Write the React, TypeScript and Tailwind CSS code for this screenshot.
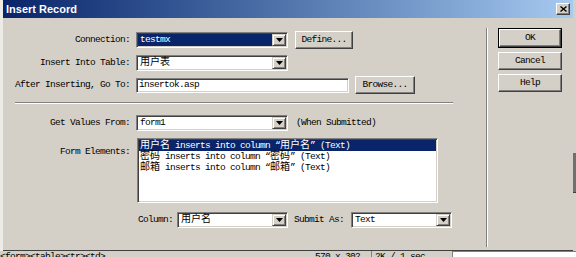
import React from 'react'

const CJK = /([\u3000-\u303f\u4e00-\u9fff\uff00-\uffef]+)/

// ASCII is squeezed to a 5px cell, Chinese keeps its full 10px width
function T({ s }: { s: string }) {
  return (
    <>
      {s.split(CJK).map((p, i) =>
        i % 2 === 1 ? (
          <span key={i} className="text-[10px] tracking-normal">
            {p}
          </span>
        ) : (
          <React.Fragment key={i}>{p}</React.Fragment>
        )
      )}
    </>
  )
}

const sunken =
  'bg-white border border-t-[#808080] border-l-[#808080] border-r-white border-b-white shadow-[inset_1px_1px_0_#404040,inset_-1px_-1px_0_#d4d0c8]'

const raised =
  'bg-[#d4d0c8] border border-t-white border-l-white border-r-[#404040] border-b-[#404040] shadow-[inset_-1px_-1px_0_#808080]'

function Arrow() {
  return (
    <div className="flex h-full w-[14px] shrink-0 items-center justify-center bg-[#d4d0c8] border border-t-[#d4d0c8] border-l-[#d4d0c8] border-r-[#404040] border-b-[#404040] shadow-[inset_1px_1px_0_#fff,inset_-1px_-1px_0_#808080]">
      <svg width="7" height="4" viewBox="0 0 7 4">
        <path d="M0 0h7L3.5 4z" fill="#000" />
      </svg>
    </div>
  )
}

function Select({
  value,
  width,
  selected = false,
}: {
  value: string
  width: string
  selected?: boolean
}) {
  return (
    <div className={`flex h-[16px] shrink-0 p-[1px] ${width} ${sunken}`}>
      <div
        className={`flex flex-1 items-center pl-[2px] leading-none ${
          selected ? 'bg-[#0a246a] text-white' : ''
        }`}
      >
        <T s={value} />
      </div>
      <Arrow />
    </div>
  )
}

function Button({ label, width }: { label: string; width: string }) {
  return (
    <div
      className={`flex h-[18px] shrink-0 items-center justify-center leading-none ${width} ${raised}`}
    >
      {label}
    </div>
  )
}

function Label({ text }: { text: string }) {
  return <div className="w-[127px] shrink-0 text-right leading-none">{text}</div>
}

const elements = [
  '用户名 inserts into column “用户名” (Text)',
  '密码 inserts into column “密码” (Text)',
  '邮箱 inserts into column “邮箱” (Text)',
]

export default function App() {
  return (
    <div className="flex h-[257px] w-[576px] flex-col overflow-hidden bg-[#d4d0c8] font-['Liberation_Mono','Noto_Sans_CJK_SC',monospace] text-[9.5px] tracking-[-0.7px] text-black">
      <div className="flex h-[251px] shrink-0">
        {/* page behind the dialog */}
        <div className="w-[3px] shrink-0 bg-[#ecebe6]" />

        {/* dialog */}
        <div className="flex w-[570px] shrink-0 flex-col border-b border-[#404040] bg-[#d4d0c8]">
          <div className="flex h-[18px] shrink-0 items-center bg-linear-to-r from-[#0a246a] to-[#a6caf0] pl-[3px] pr-[3px]">
            <span className="flex-1 font-['Liberation_Sans',sans-serif] text-[11px] font-bold tracking-normal text-white">
              Insert Record
            </span>
            <div className={`flex h-[12px] w-[14px] items-center justify-center ${raised}`}>
              <svg width="7" height="6" viewBox="0 0 7 6">
                <path d="M0.5 0.5l6 5M6.5 0.5l-6 5" stroke="#000" strokeWidth="1.4" />
              </svg>
            </div>
          </div>

          <div className="flex flex-1">
            {/* left side: the form */}
            <div className="flex w-[483px] shrink-0 flex-col">
              <div className="mt-[13px] flex h-[18px] items-center">
                <Label text="Connection:" />
                <div className="ml-[6px]">
                  <Select value="testmx" width="w-[152px]" selected />
                </div>
                <div className="ml-[7px]">
                  <Button label="Define..." width="w-[58px]" />
                </div>
              </div>

              <div className="mt-[5px] flex h-[18px] items-center">
                <Label text="Insert Into Table:" />
                <div className="ml-[6px]">
                  <Select value="用户表" width="w-[152px]" />
                </div>
              </div>

              <div className="mt-[4px] flex h-[18px] items-center">
                <Label text="After Inserting, Go To:" />
                <div
                  className={`ml-[6px] flex h-[15px] w-[213px] items-center pl-[2px] leading-none ${sunken}`}
                >
                  insertok.asp
                </div>
                <div className="ml-[6px]">
                  <Button label="Browse..." width="w-[60px]" />
                </div>
              </div>

              <div className="ml-[12px] mt-[8px] h-[2px] w-[438px] border-t border-b border-t-[#808080] border-b-white" />

              <div className="mt-[10px] flex h-[18px] items-center">
                <Label text="Get Values From:" />
                <div className="ml-[6px]">
                  <Select value="form1" width="w-[152px]" />
                </div>
                <span className="ml-[8px] leading-none">(When Submitted)</span>
              </div>

              <div className="mt-[6px] flex items-start">
                <div className="pt-[9px]">
                  <Label text="Form Elements:" />
                </div>
                <div className={`ml-[7px] flex h-[65px] w-[301px] flex-col p-[1px] ${sunken}`}>
                  {elements.map((e, i) => (
                    <div
                      key={e}
                      className={`h-[11px] whitespace-nowrap pl-[1px] leading-[11px] ${
                        i === 0 ? 'bg-[#0a246a] text-white' : ''
                      }`}
                    >
                      <T s={e} />
                    </div>
                  ))}
                </div>
              </div>

              <div className="ml-[135px] mt-[8px] flex h-[18px] items-center">
                <span className="leading-none">Column:</span>
                <div className="ml-[4px]">
                  <Select value="用户名" width="w-[111px]" />
                </div>
                <span className="ml-[6px] leading-none">Submit As:</span>
                <div className="ml-[7px]">
                  <Select value="Text" width="w-[101px]" />
                </div>
              </div>
            </div>

            {/* divider */}
            <div className="mt-[10px] h-[219px] w-[2px] shrink-0 border-l border-r border-l-[#808080] border-r-white" />

            {/* right side: the buttons */}
            <div className="ml-[10px] mt-[10px] flex flex-col gap-[4px]">
              <div className="border border-black">
                <Button label="OK" width="w-[62px]" />
              </div>
              <Button label="Cancel" width="w-[64px]" />
              <Button label="Help" width="w-[64px]" />
            </div>
          </div>
        </div>

        <div className="flex w-[3px] shrink-0 flex-col bg-[#d4d0c8]">
          <div className="mt-[153px] h-[39px] bg-[#6f6f6f]" />
          <div className="h-px bg-[#404040]" />
        </div>
      </div>

      {/* Dreamweaver status bar, cut off below */}
      <div className="flex h-[6px] shrink-0 items-start overflow-hidden leading-[10px]">
        <span className="w-[315px] shrink-0 pt-[1px]">{'<form><table><tr><td>'}</span>
        <span className="w-[56px] shrink-0 pt-[1px]">570 x 302</span>
        <span className="h-full w-px shrink-0 bg-[#808080]" />
        <span className="ml-[3px] w-[77px] shrink-0 pt-[1px]">2K / 1 sec</span>
        <div className="h-full flex-1 border-l border-t border-[#808080] bg-white" />
      </div>
    </div>
  )
}
